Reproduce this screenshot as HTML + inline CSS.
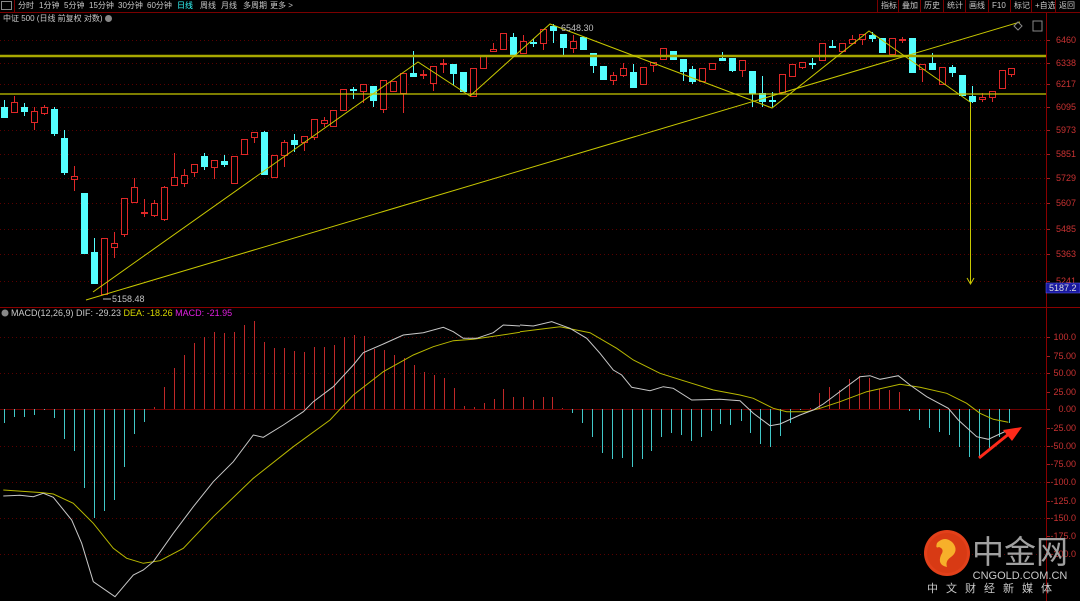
<!DOCTYPE html>
<html><head><meta charset="utf-8"><style>
html,body{margin:0;padding:0;background:#000;width:1080px;height:601px;overflow:hidden;font-family:"Liberation Sans","Noto Sans CJK SC",sans-serif;}
#top{position:absolute;left:0;top:0;width:1080px;height:12px;border-bottom:1px solid #7a0000;font-size:8px;color:#c8c8c8;line-height:12px;}
#top span{position:absolute;top:0;white-space:nowrap}
.rb{border-left:1px solid #7a0000;padding-left:3px;height:12px}
#title{position:absolute;left:3px;top:13px;font-size:8px;color:#c8c8c8;line-height:11px}
svg{position:absolute;left:0;top:0}
</style></head><body>
<svg id="s" width="1080" height="601" xmlns="http://www.w3.org/2000/svg"></svg>
<div id="top">
<span style="left:1px;top:1px;width:11px;height:9px;border:1px solid #888;box-sizing:border-box"></span>
<span style="left:14px;width:1px;height:12px;background:#7a0000"></span>
<span style="left:18px">分时</span><span style="left:39px">1分钟</span><span style="left:64px">5分钟</span><span style="left:89px">15分钟</span><span style="left:118px">30分钟</span><span style="left:147px">60分钟</span><span style="left:177px;color:#3ff">日线</span><span style="left:200px">周线</span><span style="left:221px">月线</span><span style="left:243px">多周期</span><span style="left:270px">更多 &gt;</span>
<span class="rb" style="left:877px">指标</span><span class="rb" style="left:898px">叠加</span><span class="rb" style="left:920px">历史</span><span class="rb" style="left:943px">统计</span><span class="rb" style="left:965px">画线</span><span class="rb" style="left:988px">F10</span><span class="rb" style="left:1010px">标记</span><span class="rb" style="left:1031px">+自选</span><span class="rb" style="left:1055px">返回</span>
</div>
<div id="title">中证 500 (日线 前复权 对数) <span style="display:inline-block;width:7px;height:7px;border-radius:50%;background:#888;vertical-align:-1px"></span></div>
<script>
var s=document.getElementById('s'),h='';
function L(x1,y1,x2,y2,c,w,d){h+='<line x1="'+x1+'" y1="'+y1+'" x2="'+x2+'" y2="'+y2+'" stroke="'+c+'" stroke-width="'+(w||1)+'"'+(d?' stroke-dasharray="'+d+'"':'')+'/>';}
function T(x,y,t,c,sz,a){h+='<text x="'+x+'" y="'+y+'" fill="'+c+'" font-size="'+(sz||9)+'" font-family="Liberation Sans,sans-serif"'+(a?' text-anchor="'+a+'"':'')+'>'+t+'</text>';}
var pg=[[40,'6460'],[63,'6338'],[84,'6217'],[107,'6095'],[130,'5973'],[154,'5851'],[178,'5729'],[203,'5607'],[229,'5485'],[254,'5363'],[281,'5241']];
pg.forEach(function(g){L(0,g[0]+.5,1046,g[0]+.5,'#5a0000',1,'1,3');L(1046,g[0]+.5,1050,g[0]+.5,'#a02020');T(1076,g[0]+3,g[1],'#c83232',9,'end');});
var mg=[[337,'100.0',1],[356,'75.00'],[373,'50.00',1],[392,'25.00'],[409,'0.00'],[428,'-25.00'],[446,'-50.00',1],[464,'-75.00'],[482,'-100.0',1],[501,'-125.0'],[518,'-150.0',1],[536,'-175.0'],[554,'-200.0',1]];
mg.forEach(function(g){if(g[2])L(0,g[0]+.5,1046,g[0]+.5,'#5a0000',1,'1,3');L(1046,g[0]+.5,1050,g[0]+.5,'#a02020');T(1076,g[0]+3,g[1],'#c83232',9,'end');});
L(0,409.5,1046,409.5,'#6a0000');
L(0,307.5,1080,307.5,'#8a0000');
L(1046.5,13,1046.5,601,'#8a0000');
var C=[[4,'C',107,117,100,117],[14,'R',102,112,96,113],[24,'C',107,111,103,116],[34,'R',111,122,107,130],[44,'R',107,113,105,115],[54,'C',109,133,107,136],[64,'C',138,172,130,175],[74,'R',176,179,166,191],[84,'C',193,253,193,253],[94,'C',252,283,238,284],[104,'R',238,294,238,295],[114,'R',243,247,232,258],[124,'R',198,234,198,237],[134,'R',187,202,178,203],[144,'R',212,213,199,217],[154,'R',203,215,200,217],[164,'R',187,219,186,221],[174,'R',177,185,153,185],[184,'R',175,183,169,187],[194,'R',164,172,164,177],[204,'C',156,166,153,170],[214,'R',160,167,160,179],[224,'C',161,164,155,167],[234,'R',156,183,156,184],[244,'R',139,154,139,154],[254,'R',132,137,132,143],[264,'C',132,174,131,175],[274,'R',155,177,155,177],[284,'R',142,155,140,167],[294,'C',140,144,134,152],[304,'R',136,142,136,151],[314,'R',119,137,119,140],[324,'R',120,123,117,127],
[333,'R',110,126,110,127],[343,'R',89,110,89,110],[353,'C',89,90,87,99],[363,'R',84,91,84,103],[373,'C',86,100,86,107],[383,'R',80,109,80,113],[393,'R',81,91,81,92],[403,'R',73,93,73,113],[413,'C',73,76,51,76],[423,'R',74,75,70,79],[433,'R',66,83,66,91],[443,'R',63,64,59,73],[453,'C',64,73,64,85],[463,'C',72,91,72,91],[473,'R',68,96,68,96],[483,'R',56,68,56,68],[493,'R',49,51,43,51],[503,'R',33,49,33,50],[513,'C',37,55,33,55],[523,'R',41,53,35,53],[533,'C',42,43,39,47],[543,'R',29,43,29,50],[553,'C',26,30,24,43],[563,'C',34,47,34,57],[573,'R',41,48,35,53],[583,'C',37,49,37,49],[593,'C',53,65,53,73],[603,'C',66,79,66,79],[613,'R',75,80,72,85],[623,'R',68,75,63,77],[633,'C',72,87,64,87],[643,'R',67,84,67,85],[653,'R',62,65,62,72],[663,'R',48,59,48,59],[673,'C',51,59,51,59],
[683,'C',59,71,59,81],[692,'C',69,81,66,84],[702,'R',68,81,68,81],[712,'R',63,69,63,70],[722,'C',58,60,52,60],[732,'C',58,70,58,72],[742,'R',60,70,60,77],[752,'C',71,93,71,107],[762,'C',93,101,76,107],[772,'C',100,101,92,107],[782,'R',74,92,74,92],[792,'R',64,76,64,77],[802,'R',62,67,62,69],[812,'C',63,64,58,69],[822,'R',43,60,43,60],[832,'C',46,47,40,47],[842,'R',43,51,43,51],[852,'R',39,43,35,43],[862,'R',34,39,34,45],[872,'C',35,38,32,42],[882,'C',38,52,38,52],[892,'R',38,54,38,57],[902,'R',39,40,37,43],[912,'C',38,72,38,72],[922,'R',64,69,64,82],[932,'C',63,69,53,69],[942,'R',67,84,67,84],[952,'C',67,72,65,77],[962,'C',75,95,75,95],[972,'C',96,101,86,103],[982,'R',97,99,93,102],[992,'R',91,97,91,102],[1002,'R',70,88,70,88],[1011,'R',68,74,68,77]];
C.forEach(function(c){var x=c[0],col=c[1]=='R'?'#e02828':'#54ffff';
L(x+.5,c[4],x+.5,c[5],col);
var ht=Math.max(1,c[3]-c[2]);
if(c[1]=='R')h+='<rect x="'+(x-2.5)+'" y="'+(c[2]+.5)+'" width="6" height="'+ht+'" fill="#000" stroke="'+col+'"/>';
else h+='<rect x="'+(x-3)+'" y="'+c[2]+'" width="7" height="'+(ht+1)+'" fill="'+col+'"/>';});
var Y='#c8c800';
L(0,56,1046,56,'#a8a800',2.5);L(0,94,1046,94,Y,1.2);
L(86,300,1020,22,Y);
h+='<polyline fill="none" stroke="'+Y+'" stroke-width="1" points="93,292 418,62 470,96 550,24 772,108 869,31 970,102"/>';
L(970.5,102,970.5,283,Y);
h+='<polyline fill="none" stroke="'+Y+'" points="967,278 970.5,284 974,278"/>';
T(112,302,'5158.48','#c0c0c0',9);L(103,299,111,299,'#c0c0c0');
T(561,31,'6548.30','#c0c0c0',9);
h+='<rect x="1046" y="283" width="34" height="10" fill="#1818a0" stroke="#6060ff" stroke-width=".5"/>';
T(1049,291,'5187.2','#ddd',9);
h+='<rect x="1033" y="21" width="9" height="10" fill="none" stroke="#888"/><path d="M1018 22 l4 4 -4 4 -4 -4z" fill="none" stroke="#888"/>';
var B=[[4,423],[14,417],[24,417],[34,415],[44,410],[54,418],[64,439],[74,451],[84,488],[94,518],[104,511],[114,500],[124,467],[134,434],[144,422],[154,407],[164,387],[174,368],[184,355],[194,343],[204,337],[214,332],[224,333],[234,332],[244,325],[254,321],[264,342],[274,348],[284,348],[294,351],[304,352],[314,347],[324,347],[334,345],[344,337],[354,335],[364,336],[374,349],[384,350],[394,355],[404,358],[414,365],[424,372],[434,375],[444,378],[454,388],[464,406],[474,407],[484,403],[494,399],[503,389],[513,397],[523,397],[533,400],[543,397],[552,397],[562,408],[572,413],[582,423],[592,437],[602,453],[612,459],[622,458],[632,467],[642,459],[651,451],[661,437],[671,433],[681,435],[691,441],[701,437],[711,431],[720,424],[730,425],[741,421],[750,433],[760,444],[770,447],[780,436],[790,423],[800,410],[810,408],[819,393],[829,387],[839,390],[849,379],[859,376],[869,378],[879,389],[889,390],[899,392],[909,411],[919,420],[929,428],[939,432],[949,435],[959,447],[969,457],[979,457],[989,450],[999,437],[1009,423]];
B.forEach(function(b){var col=b[1]<409?'#c02828':'#40c8c8';L(b[0]+.5,409,b[0]+.5,b[1],col);});
function P(pts,col,x0,y0){var s=pts.map(function(p){return (x0+p[0]/3).toFixed(1)+','+(y0+p[1]/3).toFixed(1)}).join(' ');h+='<polyline fill="none" stroke="'+col+'" stroke-width="1" points="'+s+'"/>';}
var dif1=[[10,558],[60,556],[100,560],[130,550],[160,562],[215,630],[245,700],[280,815],[345,860],[400,795],[430,780],[460,755],[520,670],[580,590],[640,515],[700,455],[760,375],[790,382],[850,345],[910,305],[940,275],[1000,230],[1060,165],[1090,128],[1150,102],[1210,75],[1270,68],[1330,52],[1360,65],[1390,85],[1430,85],[1480,68],[1510,45],[1560,48]];
var dea1=[[10,540],[130,548],[160,552],[220,580],[280,640],[340,715],[380,745],[430,760],[480,752],[550,715],[640,620],[760,505],[880,410],[990,330],[1060,255],[1150,185],[1240,135],[1300,110],[1360,92],[1420,88],[1560,67]];
var dif2=[[0,45],[40,48],[95,35],[150,55],[200,85],[240,130],[280,180],[305,195],[335,232],[390,242],[430,230],[460,235],[515,270],[600,268],[660,272],[700,310],[750,347],[780,342],[840,315],[880,300],[910,282],[1020,200],[1050,197],[1080,208],[1135,197],[1170,225],[1220,260],[1285,295],[1315,330],[1370,380],[1405,388],[1465,360]];
var dea2=[[0,65],[60,58],[120,50],[210,68],[290,115],[340,150],[420,190],[500,215],[580,240],[660,255],[700,265],[760,295],[800,305],[860,305],[900,295],[960,275],[1040,245],[1140,223],[1200,232],[1280,250],[1340,280],[1380,310],[1420,328],[1465,337]];
P(dea1,'#b8b800',0,310);P(dea2,'#b8b800',520,310);P(dif1,'#c8c8c8',0,310);P(dif2,'#c8c8c8',520,310);
h+='<line x1="979" y1="458" x2="1010" y2="433" stroke="#ff2a1a" stroke-width="3"/><path d="M1022 427 L1003 430 L1012 441 Z" fill="#ff2a1a"/>';
h+='<circle cx="5" cy="313" r="3.5" fill="#888"/>';
h+='<text y="316" font-size="9" font-family="Liberation Sans,sans-serif"><tspan x="11" fill="#c8c8c8">MACD(12,26,9) DIF: -29.23 </tspan><tspan fill="#d8d800">DEA: -18.26 </tspan><tspan fill="#e020e0">MACD: -21.95</tspan></text>';
h+='<circle cx="947" cy="553" r="23" fill="#e2401a"/><circle cx="947" cy="553" r="20" fill="#d83a14"/>';
h+='<path d="M937 543 q8 -8 16 0 q6 8 -2 14 q-6 4 -4 10 q-10 -2 -6 -12 q4 -6 -2 -8 q-4 2 -2 -4z" fill="#f7b02a"/>';
T(1020,563,'中金网','#a0a0a0',32,'middle');
h+='<text x="1020" y="579" fill="#c8c8c8" font-size="11" text-anchor="middle" font-family="Liberation Sans,sans-serif">CNGOLD.COM.CN</text>';
h+='<text x="927" y="592" fill="#c8c8c8" font-size="11" letter-spacing="8" font-family="Noto Sans CJK SC,sans-serif">中文财经新媒体</text>';
s.innerHTML=h;
</script>
</body></html>
